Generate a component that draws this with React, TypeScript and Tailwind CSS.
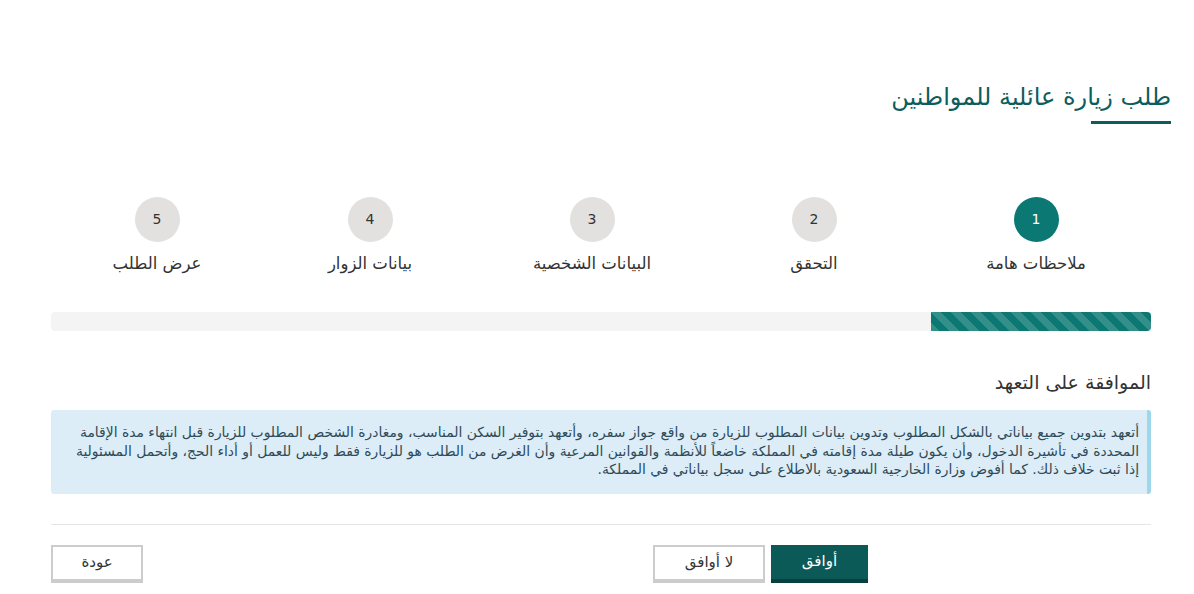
import React from "react";

const steps = [
  { n: 1, label: "ملاحظات هامة", active: true },
  { n: 2, label: "التحقق" },
  { n: 3, label: "البيانات الشخصية" },
  { n: 4, label: "بيانات الزوار" },
  { n: 5, label: "عرض الطلب" },
];

function Step({ n, label, active }: { n: number; label: string; active?: boolean }) {
  return (
    <div className="flex flex-col items-center">
      <div
        className={
          active
            ? "flex h-[45px] w-[45px] items-center justify-center rounded-full bg-[#0b7874] text-[14px] text-white"
            : "flex h-[45px] w-[45px] items-center justify-center rounded-full bg-[#e2e1df] text-[14px] text-[#333]"
        }
      >
        {n}
      </div>
      <div className="mt-[11px] text-[16.5px] leading-[22px] text-[#333]">{label}</div>
    </div>
  );
}

export default function App() {
  return (
    <div
      dir="rtl"
      className="min-h-[594px] bg-white"
      style={{ fontFamily: '"DejaVu Sans", "Noto Sans", sans-serif' }}
    >
      <div className="pr-[23px] pt-[78px]">
        <h1 className="inline-block text-[24px] font-normal leading-[38px] text-[#0b5e5c]">
          طلب زيارة عائلية للمواطنين
        </h1>
        <div className="mt-[5px] flex">
          <div className="h-[3px] w-[80px] bg-[#0b5e5c]" />
        </div>
      </div>

      <div className="pl-[51px] pr-[43px]">
        <div className="mt-[73px] grid grid-cols-[222px_222px_222px_222px_204px] pr-[4px]">
          {steps.map((s) => (
            <Step key={s.n} {...s} />
          ))}
        </div>

        <div className="mt-[37px] flex h-[19px] overflow-hidden rounded-[4px] bg-[#f4f4f4]">
          <div className="h-full w-[20%] bg-[#0b7874] bg-[linear-gradient(45deg,rgba(255,255,255,0.17)_25%,transparent_25%,transparent_50%,rgba(255,255,255,0.17)_50%,rgba(255,255,255,0.17)_75%,transparent_75%,transparent)] bg-[length:20px_20px]" />
        </div>

        <h2 className="mt-[37px] text-[19px] font-normal leading-[28px] text-[#333]">
          الموافقة على التعهد
        </h2>

        <div className="mt-[14px] rounded-[3px] border-r-[4px] border-[#9cd8ea] bg-[#dcedf7] pb-[15px] pl-[15px] pr-[8px] pt-[13px] text-[13.9px] leading-[18.5px] text-[#2f4a58]">
          أتعهد بتدوين جميع بياناتي بالشكل المطلوب وتدوين بيانات المطلوب للزيارة من واقع جواز سفره، وأتعهد بتوفير السكن المناسب، ومغادرة الشخص المطلوب للزيارة قبل انتهاء مدة الإقامة
          <br />
          المحددة في تأشيرة الدخول، وأن يكون طيلة مدة إقامته في المملكة خاضعاً للأنظمة والقوانين المرعية وأن الغرض من الطلب هو للزيارة فقط وليس للعمل أو أداء الحج، وأتحمل المسئولية
          <br />
          إذا ثبت خلاف ذلك. كما أفوض وزارة الخارجية السعودية بالاطلاع على سجل بياناتي في المملكة.
        </div>

        <div className="mt-[30px] border-t border-[#e5e5e5]" />

        <div className="mt-[20px] flex items-start">
          <div className="flex flex-1 gap-[6px] pr-[283px]">
            <button className="h-[38px] w-[97px] border-b-[4px] border-[#06413f] bg-[#0b5a57] text-[15px] text-white">
              أوافق
            </button>
            <button className="h-[38px] w-[112px] border-[2px] border-b-[4px] border-[#cccccc] bg-white text-[15px] text-[#333]">
              لا أوافق
            </button>
          </div>
          <button className="h-[38px] w-[92px] border-[2px] border-b-[4px] border-[#cccccc] bg-white text-[15px] text-[#333]">
            عودة
          </button>
        </div>
      </div>
    </div>
  );
}
